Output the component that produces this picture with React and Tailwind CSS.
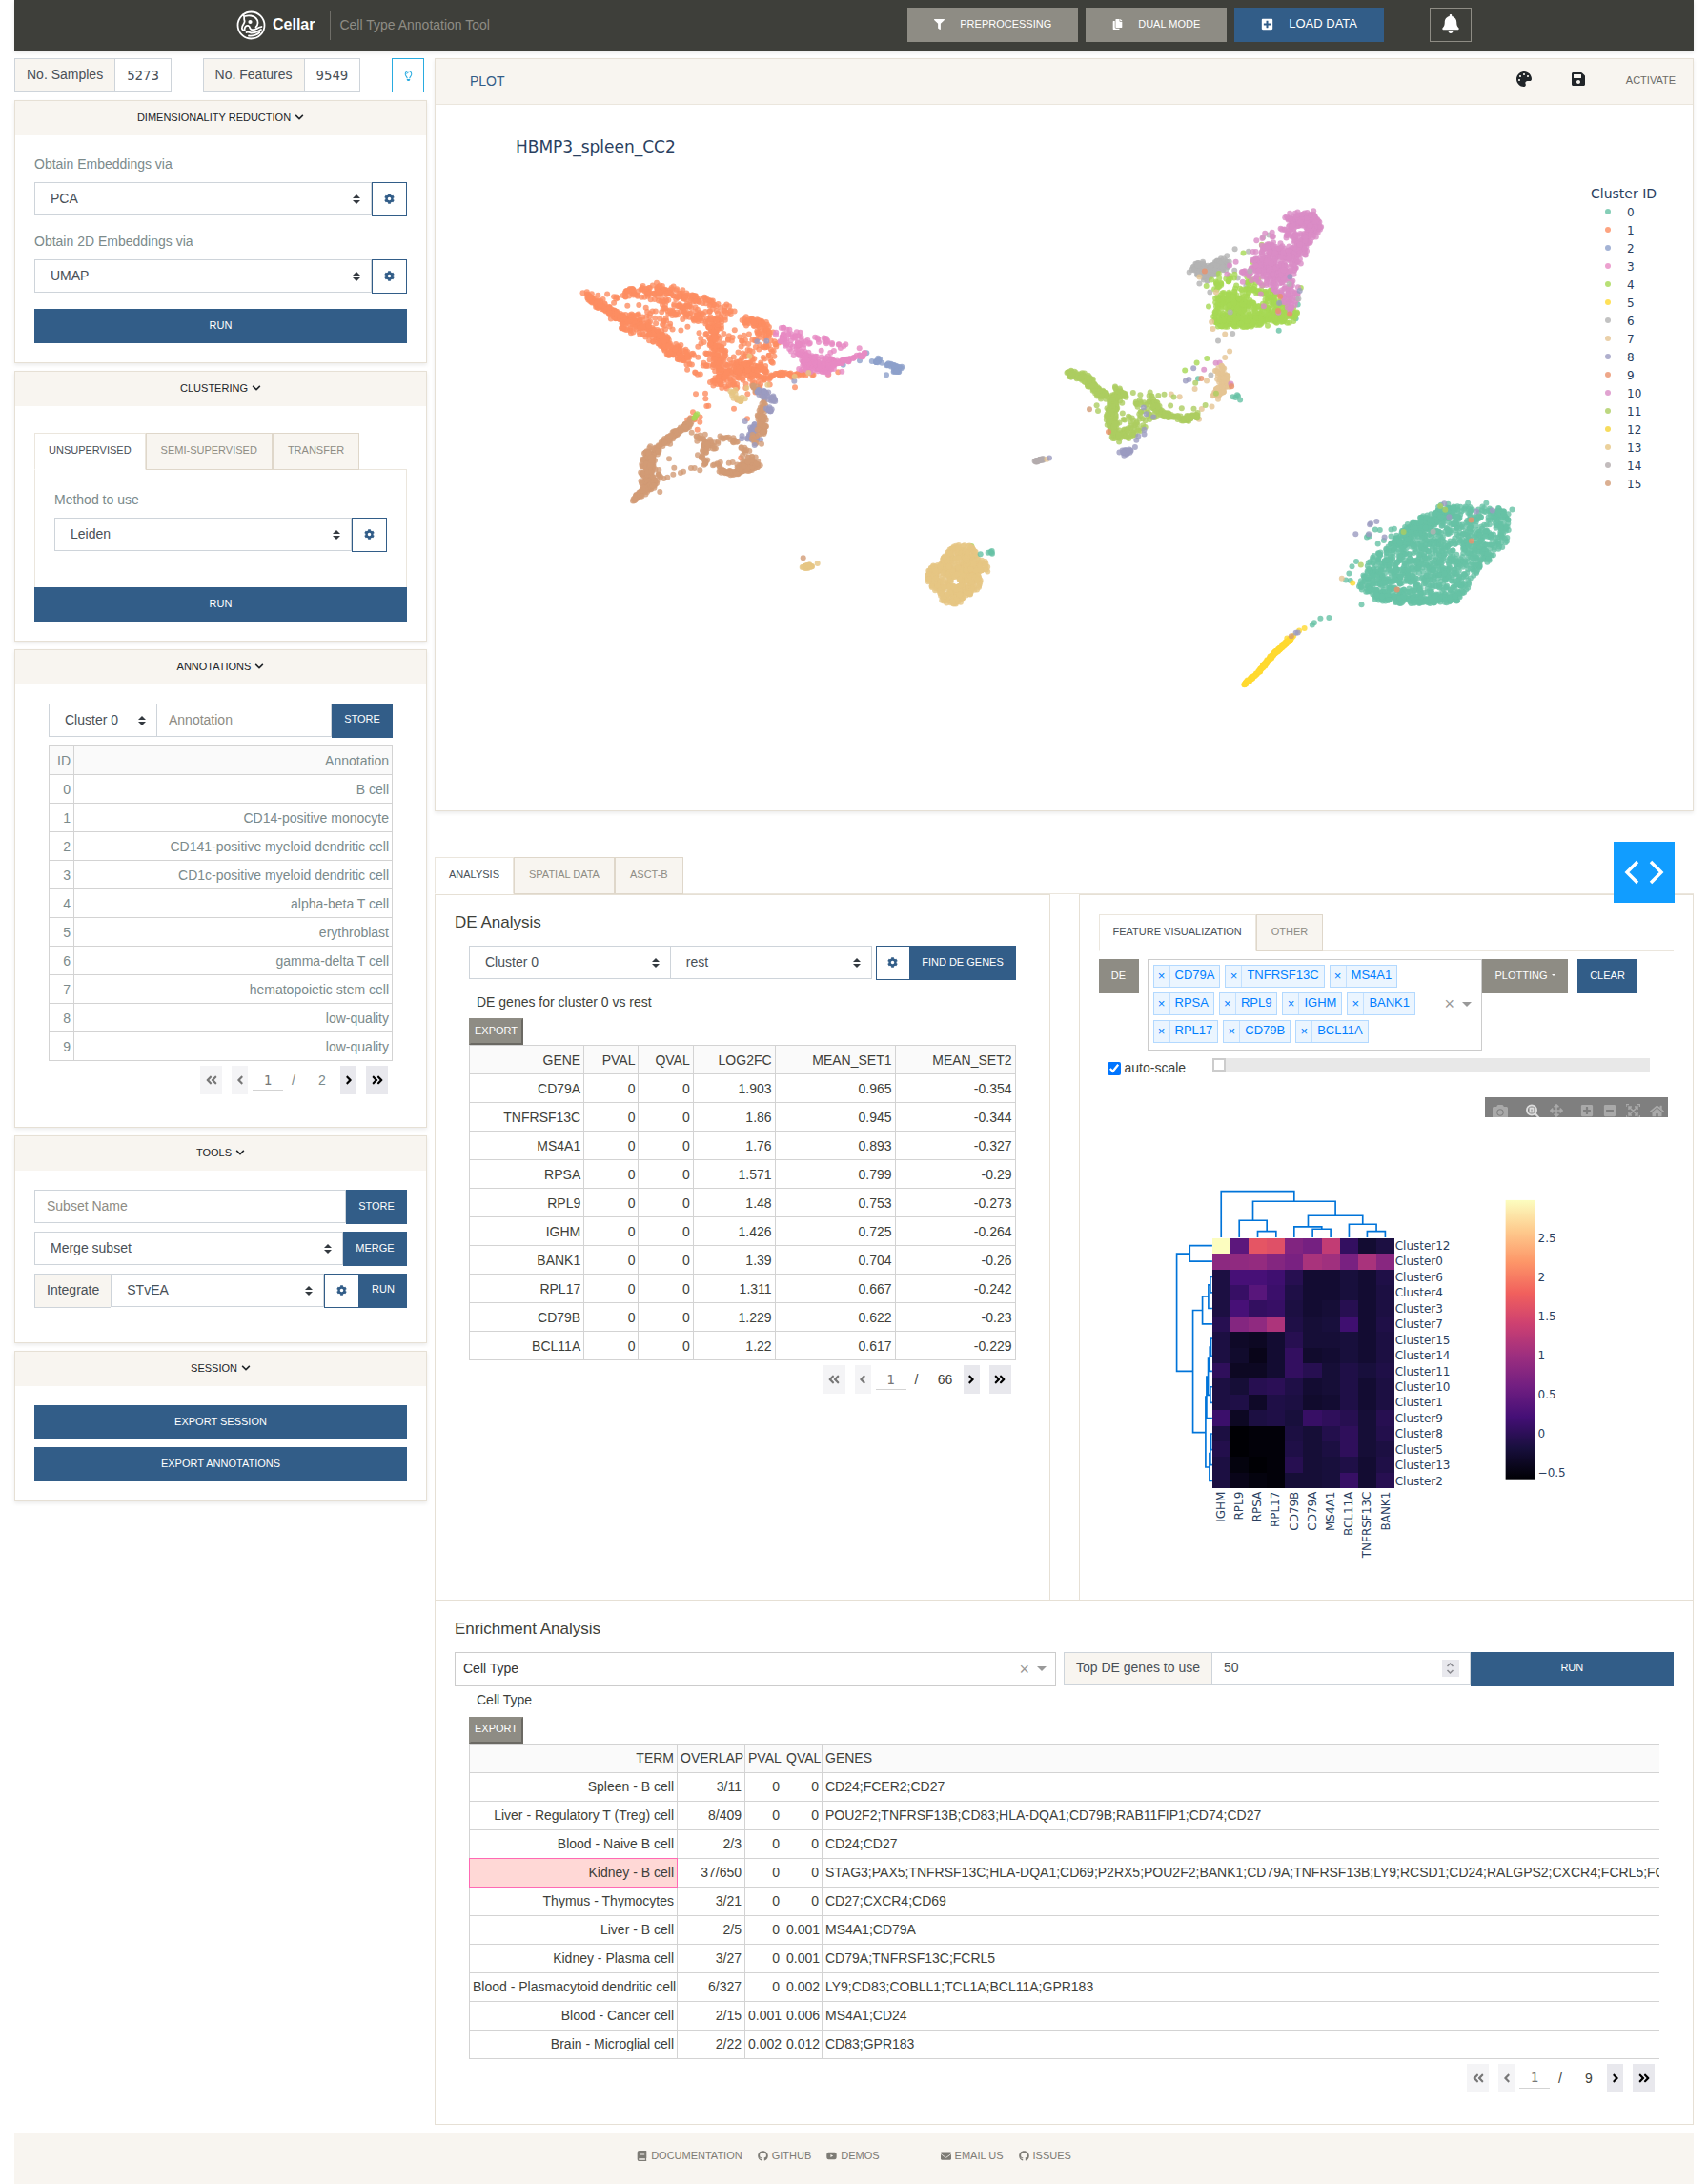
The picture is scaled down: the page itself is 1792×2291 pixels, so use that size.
import React from "react";
import {
  FaFilter, FaCopy, FaPlusSquare, FaBell, FaRegLightbulb, FaChevronDown, FaCog, FaPalette, FaSave,
  FaAngleDoubleLeft, FaAngleLeft, FaAngleRight, FaAngleDoubleRight, FaBook, FaGithub, FaYoutube,
  FaEnvelope, FaCamera, FaArrowsAlt, FaHome, FaMinusSquare,
} from "react-icons/fa";

const SORT = "pointer-events-none absolute right-3 top-1/2 -translate-y-1/2 text-[#343a40]";

function Select({ label, id, value, options = [], className = "" }) {
  return (
    <div className={"relative h-[35px] min-w-0 " + className}>
      <select
        id={id}
        aria-label={label}
        defaultValue={value}
        className="h-full w-full appearance-none border border-[#ced4da] bg-white pb-0.5 pl-4 pr-7 text-sm text-[#495057]"
      >
        {[value, ...options].map((o) => (
          <option key={o}>{o}</option>
        ))}
      </select>
      <svg className={SORT} width="8" height="10" viewBox="0 0 4 5" fill="currentColor" aria-hidden="true">
        <path d="M2 0L0 2h4zm0 5L0 3h4z" />
      </svg>
    </div>
  );
}

function Gear({ className = "w-[37px]" }) {
  return (
    <button aria-label="Settings" className={"flex h-9 shrink-0 items-center justify-center border border-[#325d88] bg-white pb-0.5 text-[#325d88] " + className}>
      <FaCog size={11} />
    </button>
  );
}

function Primary({ children, className = "" }) {
  return (
    <button className={"h-9 shrink-0 bg-[#325d88] pb-0.5 text-center text-[11px] text-white " + className}>{children}</button>
  );
}

function Card({ title, children, className = "" }) {
  return (
    <section className="border border-[#e6e0d5] bg-white shadow-[0_2px_4px_rgba(0,0,0,0.08)]">
      <button className="flex h-9 w-full items-center justify-center gap-1 bg-[#f8f5f0] pb-0.5 text-[11px] text-[#212529]">
        {title}
        <FaChevronDown size={10} />
      </button>
      <div className={"px-5 " + className}>{children}</div>
    </section>
  );
}

function Tabs({ items, className = "" }) {
  return (
    <div role="tablist" className={"flex border-b border-[#ebe6dd] " + className}>
      {items.map((t, i) => (
        <button
          key={t}
          role="tab"
          aria-selected={i === 0}
          className={
            i === 0
              ? "-mb-px h-[39px] border border-[#ebe6dd] border-b-white bg-white px-[14px] pb-0.5 text-[11px] text-[#495057]"
              : "-mb-px h-[39px] border border-[#dfd7ca] bg-[#f8f5f0] px-[15px] pb-0.5 text-[11px] text-[#8e8c84]"
          }
        >
          {t}
        </button>
      ))}
    </div>
  );
}

function Pager({ total, label }) {
  return (
    <div className="mr-[5px] mt-[5px] flex h-[30px] items-stretch justify-end text-sm">
      <button disabled aria-label="First page" className="flex w-[23px] items-center justify-center bg-[#f4f4f6] text-[#777]">
        <FaAngleDoubleLeft size={14} />
      </button>
      <button disabled aria-label="Previous page" className="ml-[10px] flex w-[17px] items-center justify-center bg-[#f4f4f6] text-[#777]">
        <FaAngleLeft size={14} />
      </button>
      <input
        aria-label={label}
        defaultValue="1"
        className="mb-1 ml-[5px] w-8 border-b border-[#d3d3d3] pt-1 text-center font-['DejaVu_Sans_Mono',monospace] text-sm text-[#777]"
      />
      <span className="w-[22px] self-center text-center">/</span>
      <span className="w-[38px] self-center text-center">{total}</span>
      <button aria-label="Next page" className="flex w-[17px] items-center justify-center bg-[#e8e8ed] text-black">
        <FaAngleRight size={14} />
      </button>
      <button aria-label="Last page" className="ml-[10px] flex w-[23px] items-center justify-center bg-[#e8e8ed] text-black">
        <FaAngleDoubleRight size={14} />
      </button>
    </div>
  );
}

const CELL = "h-[30px] border border-[#d3d3d3] px-[3px] text-right font-normal";
const CELL_ACTIVE = "h-[30px] border border-[#ff69b4] bg-[#ffd8d6] px-[3px] text-right font-normal";
const CELL_ABOVE_ACTIVE = "h-[30px] border border-[#d3d3d3] border-b-[#ff69b4] px-[3px] text-right font-normal";

function termCell(row) {
  if (row === 3) return CELL_ACTIVE;
  return row === 2 ? CELL_ABOVE_ACTIVE : CELL;
}

function Logo() {
  return (
    <svg width="31" height="31" viewBox="0 0 31 31" fill="none" stroke="white" strokeWidth="1.8" strokeLinecap="round" strokeLinejoin="round" aria-hidden="true">
      <circle cx="15.5" cy="15.5" r="14" />
      <path d="M7.500 5C9 7 7.500 8.500 8.500 10.500C9.500 13 6.500 14.500 6 17.500C5.500 20 7 21 8.500 20.500" />
      <path d="M9 6C13 4.500 18 5.500 20.500 8C23.500 11 23 15 20.500 17.500" />
      <path d="M8.500 20.500C8.500 17.500 10 15.500 12.500 16C14.500 16.500 13.500 18.500 15 19.500C17.500 21.500 20.500 19.500 22.500 18.500C24.500 17 25.500 17.500 26.500 17" />
      <path d="M10.500 23C12.500 21.500 13.500 23.500 15.500 23.500C19 23.500 22.500 22.500 26 20M13 26.500C17.500 27 21.500 25.500 24.500 23" />
      <circle cx="14.500" cy="12" r="1.200" fill="white" />
    </svg>
  );
}

/* ---------- UMAP scatter ---------- */

const C = {
  0: "#66c2a5", 1: "#fc8d62", 2: "#8da0cb", 3: "#e78ac3", 4: "#a6d854", 5: "#ffd92f", 6: "#b3b3b3",
  7: "#e5c494", 8: "#9b9bc0", 9: "#ea916b", 10: "#d98cc5", 11: "#adcd60", 12: "#f5d336", 13: "#e6c583",
  14: "#b3abad", 15: "#d29b75",
};

function rng(seed) {
  let s = seed;
  return () => {
    s = (s * 1664525 + 1013904223) % 4294967296;
    return s / 4294967296;
  };
}

function inside(poly, x, y) {
  let c = false;
  for (let i = 0, j = poly.length - 1; i < poly.length; j = i++) {
    const [xi, yi] = poly[i];
    const [xj, yj] = poly[j];
    if (yi > y !== yj > y && x < ((xj - xi) * (y - yi)) / (yj - yi) + xi) c = !c;
  }
  return c;
}

function buildPoints() {
  const r = rng(11);
  const out = [];
  let map = (x, y) => [x, y];
  const put = (c, x, y) => out.push([c, ...map(x, y)]);
  const blob = (c, poly, n, holes = [], keep = 0.06) => {
    const xs = poly.map((p) => p[0]);
    const ys = poly.map((p) => p[1]);
    const x0 = Math.min(...xs), x1 = Math.max(...xs), y0 = Math.min(...ys), y1 = Math.max(...ys);
    let k = 0;
    let guard = 0;
    while (k < n && guard++ < 60000) {
      const x = x0 + r() * (x1 - x0);
      const y = y0 + r() * (y1 - y0);
      if (!inside(poly, x, y)) continue;
      if (holes.some(([hx, hy, a, b]) => ((x - hx) / a) ** 2 + ((y - hy) / b) ** 2 < 1) && r() > keep) continue;
      put(c, x, y);
      k++;
    }
  };
  const trail = (c, pts, w, n) => {
    const seg = [];
    let len = 0;
    for (let i = 1; i < pts.length; i++) {
      const l = Math.hypot(pts[i][0] - pts[i - 1][0], pts[i][1] - pts[i - 1][1]);
      seg.push(l);
      len += l;
    }
    for (let k = 0; k < n; k++) {
      let t = r() * len;
      let i = 0;
      while (i < seg.length - 1 && t > seg[i]) t -= seg[i++];
      const f = t / seg[i];
      const j = () => (r() + r() - 1) * w;
      put(c, pts[i][0] + (pts[i + 1][0] - pts[i][0]) * f + j(), pts[i][1] + (pts[i + 1][1] - pts[i][1]) * f + j());
    }
  };
  const dots = (c, list) => list.forEach(([x, y]) => put(c, x, y));

  map = (x, y) => [590 + x / 3, 200 + y / 3];
  blob(1, [[75, 325], [105, 328], [150, 325], [200, 320], [285, 298], [325, 298], [390, 315], [455, 338], [525, 370], [545, 395], [560, 405], [600, 395], [655, 428], [685, 468], [672, 505], [668, 560], [665, 605], [610, 635], [530, 625], [480, 620], [425, 590], [395, 570], [370, 540], [320, 512], [250, 462], [195, 440], [150, 405], [110, 368]], 520,
    [[235, 362, 68, 24], [395, 450, 58, 44], [545, 428, 38, 32], [300, 375, 20, 25], [420, 530, 20, 40], [350, 400, 22, 16], [540, 500, 22, 22], [450, 590, 30, 14], [620, 540, 30, 12]]);
  trail(1, [[72, 324], [105, 350], [155, 385], [205, 410]], 14, 110);
  trail(1, [[200, 410], [290, 445], [330, 490], [405, 535]], 24, 140);
  trail(1, [[190, 322], [290, 305], [390, 330], [535, 380]], 18, 100);
  trail(1, [[310, 380], [400, 375], [440, 420]], 28, 45);
  trail(1, [[480, 400], [475, 490], [510, 580]], 26, 100);
  trail(1, [[500, 590], [560, 560], [640, 570]], 30, 100);
  trail(1, [[570, 405], [625, 420], [650, 460]], 18, 50);
  trail(1, [[665, 575], [730, 580], [785, 573]], 10, 35);
  trail(1, [[395, 722], [440, 712]], 10, 8);
  dots(1, [[420, 640], [450, 638], [451, 655], [460, 677], [454, 678], [540, 686], [582, 718], [411, 697], [433, 728], [425, 752], [732, 619], [868, 571], [583, 640], [625, 695], [562, 841], [205, 362], [241, 360], [263, 368], [550, 658], [838, 578]]);
  trail(2, [[980, 540], [995, 535]], 9, 14);
  trail(2, [[1020, 546], [1070, 560]], 7, 26);
  trail(2, [[1040, 570], [1056, 568]], 6, 10);
  dots(2, [[1006, 542], [1020, 580], [936, 535], [884, 548], [958, 511], [994, 527]]);
  blob(3, [[668, 450], [692, 425], [722, 437], [760, 450], [830, 464], [893, 485], [862, 520], [855, 545], [835, 578], [775, 578], [742, 562], [760, 530], [712, 525], [690, 480]], 130, [[812, 500, 40, 20], [722, 545, 25, 20]]);
  trail(3, [[765, 535], [825, 560], [850, 545]], 20, 80);
  trail(3, [[850, 545], [905, 533], [952, 512]], 8, 50);
  trail(3, [[735, 475], [745, 510], [780, 535]], 12, 36);
  dots(3, [[892, 484], [935, 496], [880, 569], [836, 578], [815, 503]]);
  trail(15, [[408, 722], [380, 748], [345, 770]], 11, 60);
  trail(15, [[345, 775], [300, 810], [275, 850]], 14, 80);
  trail(15, [[275, 830], [268, 890], [275, 935]], 26, 160);
  trail(15, [[290, 915], [250, 950], [222, 972]], 11, 80);
  trail(15, [[300, 890], [320, 905]], 20, 8);
  trail(15, [[430, 772], [455, 800], [480, 800]], 15, 34);
  trail(15, [[480, 790], [510, 772], [550, 790]], 13, 18);
  trail(15, [[450, 800], [448, 865], [500, 862]], 13, 26);
  trail(15, [[498, 882], [545, 890], [575, 870]], 8, 60);
  trail(15, [[560, 875], [612, 862]], 17, 80);
  trail(15, [[572, 812], [575, 850], [610, 850]], 18, 24);
  trail(15, [[600, 610], [640, 650], [622, 720]], 14, 32);
  trail(8, [[600, 625], [640, 640], [672, 660]], 13, 30);
  trail(8, [[648, 685], [655, 695]], 9, 10);
  trail(8, [[605, 735], [595, 775]], 14, 34);
  trail(8, [[565, 777], [625, 782]], 9, 16);
  trail(15, [[628, 705], [628, 765]], 15, 50);
  trail(15, [[600, 765], [606, 800]], 10, 9);
  dots(15, [[336, 844], [352, 872], [349, 893], [331, 902], [372, 888], [381, 884], [405, 873], [416, 873], [433, 880], [446, 863], [307, 948], [426, 832], [424, 788], [524, 857], [536, 855], [627, 797], [758, 1156], [277, 805], [407, 761]]);
  dots(8, [[613, 475], [643, 473], [730, 599], [575, 726], [605, 801]]);
  trail(13, [[532, 632], [550, 655], [580, 658]], 9, 16);
  dots(13, [[589, 521], [775, 573], [731, 585], [646, 611], [580, 620], [803, 1173], [545, 627]]);
  dots(4, [[417, 714], [420, 707], [415, 716], [424, 703], [1288, 1119]]);
  blob(13, [[1228, 1120], [1265, 1110], [1295, 1122], [1308, 1155], [1340, 1165], [1342, 1195], [1320, 1225], [1310, 1255], [1245, 1303], [1200, 1300], [1175, 1262], [1147, 1230], [1148, 1200], [1185, 1162]], 560, [[1322, 1205, 14, 9]]);
  trail(13, [[756, 1186], [784, 1182]], 8, 22);
  dots(0, [[1316, 1144], [1340, 1139], [1352, 1134], [1353, 1142], [1348, 1137], [1351, 1139]]);

  map = (x, y) => [1080 + x / 2.904, 200 + y / 2.904];
  blob(0, [[1035, 1120], [1085, 1090], [1130, 1030], [1200, 990], [1290, 962], [1340, 958], [1395, 960], [1465, 972], [1468, 1035], [1450, 1080], [1400, 1130], [1360, 1172], [1340, 1212], [1300, 1255], [1200, 1258], [1130, 1258], [1055, 1250], [1000, 1205], [1020, 1165]], 1250,
    [[1155, 1205, 22, 12], [1420, 1030, 14, 10], [1375, 1015, 9, 16], [1400, 1065, 12, 8]]);
  trail(0, [[1100, 1100], [1180, 1030], [1290, 970]], 30, 170);
  trail(0, [[1050, 1230], [1200, 1250], [1310, 1240]], 14, 110);
  dots(0, [[1032, 1050], [1028, 1056], [1036, 1053], [1062, 1076], [1080, 1066], [1054, 1032], [1068, 1034], [1102, 1032], [1112, 1030], [1102, 1053], [996, 1130], [983, 1145], [974, 1166], [964, 1186], [1012, 1261], [978, 1188], [913, 1301], [887, 1303], [868, 1316], [862, 1323], [1336, 952], [1392, 952], [1471, 971], [818, 347], [760, 426], [812, 390], [514, 573], [620, 628], [633, 622], [642, 637], [628, 630], [636, 626]]);
  dots(9, [[1346, 1003], [1347, 1067], [1120, 1215]]);
  dots(8, [[1264, 953], [1058, 1008], [1040, 1014], [1037, 1017], [994, 1046], [1034, 1046], [1082, 1056], [1362, 977], [1411, 974], [1279, 994]]);
  dots(6, [[1230, 1039]]);
  dots(11, [[1010, 1140], [1140, 1040], [1267, 972], [1252, 961]]);
  dots(7, [[952, 1181]]);
  trail(5, [[655, 1503], [690, 1475], [745, 1410], [800, 1362]], 4, 200);
  dots(5, [[785, 1363], [822, 1340], [838, 1333], [805, 1356], [985, 1195]]);
  dots(15, [[798, 1357]]);
  dots(8, [[812, 1347], [818, 1346]]);

  trail(6, [[505, 240], [545, 245], [595, 225]], 22, 190);
  trail(6, [[515, 220], [540, 262]], 18, 40);
  dots(6, [[487, 248], [602, 198], [592, 208], [626, 178], [668, 185], [625, 243], [550, 309], [518, 283], [542, 275], [635, 266], [575, 457], [619, 436], [712, 142], [730, 135], [553, 562], [660, 290], [572, 286]]);
  dots(9, [[534, 245], [524, 572]]);
  blob(4, [[560, 330], [600, 300], [690, 290], [760, 310], [808, 350], [808, 408], [760, 398], [650, 418], [560, 408]], 330, [[700, 330, 25, 14]]);
  trail(4, [[565, 395], [680, 400], [805, 375]], 22, 190);
  trail(4, [[580, 340], [660, 345]], 28, 70);
  trail(4, [[550, 292], [600, 265], [700, 280]], 22, 34);
  dots(4, [[546, 353], [652, 190], [680, 218], [827, 296], [541, 511], [510, 524], [474, 547], [663, 263], [708, 165]]);
  blob(10, [[770, 100], [800, 72], [865, 60], [888, 110], [850, 150], [848, 190], [825, 215], [800, 260], [822, 290], [820, 330], [800, 375], [770, 335], [740, 300], [685, 285], [645, 250], [690, 200], [700, 170], [715, 130], [755, 125]], 330, [[765, 162, 34, 20]]);
  trail(10, [[790, 95], [850, 80], [870, 115], [830, 160]], 26, 160);
  trail(10, [[825, 165], [790, 205], [720, 170]], 20, 100);
  trail(10, [[700, 210], [745, 250], [790, 250]], 34, 130);
  dots(10, [[692, 152], [718, 130], [866, 62], [889, 110], [629, 217], [610, 228], [602, 255], [647, 248], [650, 278], [827, 222], [714, 352], [759, 371], [705, 315], [568, 525], [580, 524], [532, 545], [797, 358], [794, 370]]);
  dots(6, [[792, 285], [672, 245], [612, 370], [820, 330]]);
  dots(8, [[761, 343], [794, 262], [824, 305]]);
  dots(9, [[764, 322], [758, 366], [793, 376]]);
  dots(7, [[518, 263], [569, 309], [555, 400], [559, 421], [596, 437], [610, 489], [596, 508], [540, 579], [504, 604], [556, 658], [525, 665], [517, 696], [432, 620], [458, 628], [575, 635]]);
  blob(7, [[562, 550], [588, 532], [618, 590], [598, 612], [572, 632], [556, 625], [578, 590]], 100);
  dots(10, [[614, 588]]);
  dots(9, [[616, 596]]);
  trail(11, [[122, 555], [170, 572], [205, 612], [235, 628]], 17, 150);
  blob(11, [[230, 635], [262, 600], [295, 615], [275, 680], [320, 645], [372, 615], [405, 670], [365, 718], [320, 748], [260, 762], [240, 705]], 120, [[300, 660, 22, 16], [275, 720, 14, 10]]);
  trail(11, [[258, 625], [248, 690], [262, 755]], 18, 130);
  trail(11, [[265, 745], [330, 738]], 14, 26);
  trail(11, [[375, 640], [400, 682], [480, 698], [520, 680]], 11, 100);
  trail(11, [[265, 605], [290, 625]], 14, 30);
  dots(11, [[316, 616], [338, 622], [368, 614], [393, 624], [411, 621], [430, 655], [464, 663], [501, 664], [536, 653], [440, 629], [205, 654], [209, 671], [506, 586], [569, 618]]);
  trail(8, [[284, 797], [306, 795]], 10, 24);
  dots(8, [[348, 661], [356, 680], [378, 690], [350, 742], [332, 748], [326, 760], [322, 781], [500, 541], [476, 579], [486, 575], [350, 728], [274, 797]]);
  dots(15, [[183, 666]]);
  dots(9, [[241, 735]]);
  trail(14, [[17, 825], [42, 818]], 3, 30);
  dots(7, [[53, 818]]);
  dots(8, [[61, 815]]);
  return out;
}

const POINTS = buildPoints();
const LEGEND = Array.from({ length: 16 }, (_, i) => i);

function Scatter() {
  return (
    <svg viewBox="457 110 1319 740" className="block h-auto w-full" fontFamily="'DejaVu Sans', Verdana, sans-serif" role="img" aria-label="UMAP scatter plot of HBMP3_spleen_CC2">
      <text x="541" y="160" fontSize="17" fill="#2a3f5f">HBMP3_spleen_CC2</text>
      {POINTS.map(([c, x, y], i) => (
        <circle key={i} cx={x.toFixed(1)} cy={y.toFixed(1)} r="3" fill={C[c]} fillOpacity="0.8" />
      ))}
      <text x="1669" y="208" fontSize="14" fill="#2a3f5f">Cluster ID</text>
      {LEGEND.map((i) => (
        <g key={i}>
          <circle cx="1687" cy={222 + i * 19} r="3" fill={C[i]} fillOpacity="0.8" />
          <text x="1707" y={227 + i * 19} fontSize="12" fill="#2a3f5f">{i}</text>
        </g>
      ))}
    </svg>
  );
}

/* ---------- Clustered heatmap ---------- */

const MAGMA = ["#000004", "#180f3d", "#440f76", "#721f81", "#9e2f7f", "#cd4071", "#f1605d", "#fd9668", "#feca8d", "#fcfdbf"];

function magma(v) {
  const p = (v / 100) * (MAGMA.length - 1);
  const i = Math.min(Math.floor(p), MAGMA.length - 2);
  const f = p - i;
  const ch = (h, k) => parseInt(h.slice(1 + k * 2, 3 + k * 2), 16);
  return "rgb(" + [0, 1, 2].map((k) => Math.round(ch(MAGMA[i], k) * (1 - f) + ch(MAGMA[i + 1], k) * f)).join(",") + ")";
}

const GENES = ["IGHM", "RPL9", "RPSA", "RPL17", "CD79B", "CD79A", "MS4A1", "BCL11A", "TNFRSF13C", "BANK1"];
const HEAT = [
  ["Cluster12", 100, 28, 63, 61, 37, 34, 53, 18, 9, 12],
  ["Cluster0", 40, 41, 42, 38, 35, 47, 45, 35, 47, 39],
  ["Cluster6", 12, 23, 23, 21, 15, 9, 9, 11, 9, 13],
  ["Cluster4", 12, 19, 27, 20, 13, 9, 9, 11, 9, 12],
  ["Cluster3", 12, 23, 18, 19, 12, 9, 10, 15, 9, 12],
  ["Cluster7", 15, 38, 41, 48, 13, 10, 11, 21, 9, 13],
  ["Cluster15", 12, 7, 6, 9, 15, 10, 10, 11, 9, 12],
  ["Cluster14", 12, 8, 4, 9, 18, 8, 9, 11, 9, 12],
  ["Cluster11", 17, 6, 6, 9, 18, 15, 10, 13, 11, 13],
  ["Cluster10", 12, 10, 15, 16, 13, 9, 10, 13, 9, 12],
  ["Cluster1", 12, 13, 7, 13, 12, 8, 9, 13, 9, 12],
  ["Cluster9", 20, 6, 12, 13, 11, 19, 17, 15, 10, 15],
  ["Cluster8", 12, 0, 1, 1, 12, 10, 14, 17, 10, 14],
  ["Cluster5", 14, 0, 1, 1, 13, 10, 12, 17, 10, 12],
  ["Cluster13", 12, 2, 0, 1, 15, 10, 11, 13, 9, 13],
  ["Cluster2", 12, 4, 2, 1, 10, 10, 11, 19, 9, 15],
];

const DENDRO =
  "M241 231V86H471V118M341 178V118H601V163M298 231V178H385V212M356 231V212H414V231" +
  "M515 198V163H687V190M471 231V198H558V205M529 231V205H586V231M644 231V190H730V212M701 231V212H758V231" +
  "M142 283H101V653H152M213 257H142V307H213M182 461H152V846H192M201 417H182V504H213" +
  "M207 381H201V455H213M213 356H207V405H213M195 733H192V955H204M207 912H204V998H213" +
  "M209 873H207V948H213M213 850H209V900H213M200 670H195V801H213M205 613H200V728H207M209 577H205V653H213" +
  "M213 550H209V605H213M213 702H207V752H213";

function Heatmap() {
  return (
    <svg viewBox="1152 1171 604 480" className="block h-auto w-full" fontFamily="'DejaVu Sans', Verdana, sans-serif" fontSize="12" fill="#2a3f5f" role="img" aria-label="Clustered heatmap of gene expression">
      <defs>
        <linearGradient id="magma" x1="0" y1="1" x2="0" y2="0">
          {MAGMA.map((c, i) => (
            <stop key={c} offset={i / (MAGMA.length - 1)} stopColor={c} />
          ))}
        </linearGradient>
      </defs>
      <path transform="translate(1200 1220) scale(0.3333)" d={DENDRO} fill="none" stroke="#0074d9" strokeWidth="5" />
      <g shapeRendering="crispEdges">
        {HEAT.map((row, j) =>
          row.slice(1).map((v, i) => (
            <rect key={i + "-" + j} x={1271 + i * 19.12} y={1298 + j * 16.4} width="19.5" height="16.7" fill={magma(v)} />
          ))
        )}
      </g>
      {HEAT.map((row, j) => (
        <text key={row[0]} x="1463" y={1310 + j * 16.47}>{row[0]}</text>
      ))}
      {GENES.map((g, i) => (
        <text key={g} textAnchor="end" transform={`translate(${1284 + i * 19.2} 1564) rotate(-90)`}>{g}</text>
      ))}
      <rect x="1579" y="1258" width="31" height="293" fill="url(#magma)" />
      {["2.5", "2", "1.5", "1", "0.5", "0", "−0.5"].map((t, i) => (
        <text key={t} x="1613" y={1302 + i * 41}>{t}</text>
      ))}
    </svg>
  );
}

/* ---------- Data ---------- */

const ANNOTATIONS = [
  "B cell", "CD14-positive monocyte", "CD141-positive myeloid dendritic cell", "CD1c-positive myeloid dendritic cell",
  "alpha-beta T cell", "erythroblast", "gamma-delta T cell", "hematopoietic stem cell", "low-quality", "low-quality",
];

const DE = [
  ["CD79A", 0, 0, "1.903", "0.965", "-0.354"],
  ["TNFRSF13C", 0, 0, "1.86", "0.945", "-0.344"],
  ["MS4A1", 0, 0, "1.76", "0.893", "-0.327"],
  ["RPSA", 0, 0, "1.571", "0.799", "-0.29"],
  ["RPL9", 0, 0, "1.48", "0.753", "-0.273"],
  ["IGHM", 0, 0, "1.426", "0.725", "-0.264"],
  ["BANK1", 0, 0, "1.39", "0.704", "-0.26"],
  ["RPL17", 0, 0, "1.311", "0.667", "-0.242"],
  ["CD79B", 0, 0, "1.229", "0.622", "-0.23"],
  ["BCL11A", 0, 0, "1.22", "0.617", "-0.229"],
];

const ENRICH = [
  ["Spleen - B cell", "3/11", "0", "0", "CD24;FCER2;CD27"],
  ["Liver - Regulatory T (Treg) cell", "8/409", "0", "0", "POU2F2;TNFRSF13B;CD83;HLA-DQA1;CD79B;RAB11FIP1;CD74;CD27"],
  ["Blood - Naive B cell", "2/3", "0", "0", "CD24;CD27"],
  ["Kidney - B cell", "37/650", "0", "0", "STAG3;PAX5;TNFRSF13C;HLA-DQA1;CD69;P2RX5;POU2F2;BANK1;CD79A;TNFRSF13B;LY9;RCSD1;CD24;RALGPS2;CXCR4;FCRL5;FC"],
  ["Thymus - Thymocytes", "3/21", "0", "0", "CD27;CXCR4;CD69"],
  ["Liver - B cell", "2/5", "0", "0.001", "MS4A1;CD79A"],
  ["Kidney - Plasma cell", "3/27", "0", "0.001", "CD79A;TNFRSF13C;FCRL5"],
  ["Blood - Plasmacytoid dendritic cell", "6/327", "0", "0.002", "LY9;CD83;COBLL1;TCL1A;BCL11A;GPR183"],
  ["Blood - Cancer cell", "2/15", "0.001", "0.006", "MS4A1;CD24"],
  ["Brain - Microglial cell", "2/22", "0.002", "0.012", "CD83;GPR183"],
];

const TAG_ROWS = [
  ["CD79A", "TNFRSF13C", "MS4A1"],
  ["RPSA", "RPL9", "IGHM", "BANK1"],
  ["RPL17", "CD79B", "BCL11A"],
];

function Export() {
  return (
    <button className="block h-7 border-2 border-b-[#6b6963] border-l-[#8e8c84] border-r-[#6b6963] border-t-[#8e8c84] bg-[#8e8c84] px-1 pb-0.5 text-[11px] text-white">
      EXPORT
    </button>
  );
}

function Stat({ label, value }) {
  return (
    <div className="flex h-[35px] items-stretch border border-[#ced4da] text-sm text-[#495057]">
      <span className="flex items-center border-r border-[#ced4da] bg-[#f8f5f0] px-3 pb-0.5">{label}</span>
      <span className="flex items-center px-3 font-['DejaVu_Sans_Mono',monospace]">{value}</span>
    </div>
  );
}

function Navbar() {
  return (
    <header className="bg-[#3e3f3a] shadow-[0_2px_4px_rgba(0,0,0,0.1)]">
      <div className="mx-auto flex h-[53px] max-w-[1296px] items-center justify-between">
        <div className="flex items-center">
          <Logo />
          <span className="ml-[7px] pb-0.5 text-base font-bold text-white">Cellar</span>
          <span className="ml-4 border-l border-[#6f6e68] pb-0.5 pl-[9px] text-sm leading-[28px] text-[#8e8c84]">Cell Type Annotation Tool</span>
        </div>
        <div className="flex items-center gap-2 pb-px text-white">
          <button className="flex h-9 items-center gap-4 bg-[#8e8c84] px-7 pb-0.5 text-[11px]">
            <FaFilter size={11} />
            PREPROCESSING
          </button>
          <button className="flex h-9 items-center gap-4 bg-[#8e8c84] px-7 pb-0.5 text-[11px]">
            <FaCopy size={11} />
            DUAL MODE
          </button>
          <button className="flex h-9 items-center gap-4 bg-[#325d88] px-7 pb-0.5 text-[13px]">
            <FaPlusSquare size={13} />
            LOAD DATA
          </button>
          <button aria-label="Notifications" className="ml-10 flex h-9 w-11 items-center justify-center border border-[#8e8c84] pb-0.5">
            <FaBell size={20} />
          </button>
        </div>
      </div>
    </header>
  );
}

function Sidebar() {
  return (
    <aside className="flex min-w-0 flex-col gap-2">
      <div className="mr-[3px] flex h-9 items-start justify-between">
        <Stat label="No. Samples" value="5273" />
        <Stat label="No. Features" value="9549" />
        <button aria-label="Hints" className="flex h-9 w-[34px] items-center justify-center border border-[#29abe0] text-[#29abe0]">
          <FaRegLightbulb size={11} />
        </button>
      </div>

      <Card title="DIMENSIONALITY REDUCTION" className="py-5">
        <p className="mb-2 text-sm leading-[21px] text-[#7b8a8b]">Obtain Embeddings via</p>
        <div className="mb-4 flex">
          <Select label="Obtain Embeddings via" value="PCA" className="flex-1" />
          <Gear />
        </div>
        <p className="mb-2 text-sm leading-[21px] text-[#7b8a8b]">Obtain 2D Embeddings via</p>
        <div className="mb-4 flex">
          <Select label="Obtain 2D Embeddings via" value="UMAP" className="flex-1" />
          <Gear />
        </div>
        <Primary className="block w-full">RUN</Primary>
      </Card>

      <Card title="CLUSTERING" className="pb-5 pt-7">
        <Tabs items={["UNSUPERVISED", "SEMI-SUPERVISED", "TRANSFER"]} />
        <div className="border-x border-[#ebe6dd] px-5 pb-[37px] pt-[21px]">
          <p className="mb-2 text-sm leading-[21px] text-[#7b8a8b]">Method to use</p>
          <div className="flex">
            <Select label="Method to use" value="Leiden" className="flex-1" />
            <Gear />
          </div>
        </div>
        <Primary className="block w-full">RUN</Primary>
      </Card>

      <Card title="ANNOTATIONS" className="pb-[34px] pt-5">
        <div className="px-[15px] text-sm text-[#7b8a8b]">
          <div className="mb-2 flex">
            <Select label="Cluster to annotate" value="Cluster 0" className="w-[114px]" />
            <input aria-label="Annotation" placeholder="Annotation" className="h-[35px] min-w-0 flex-1 border border-l-0 border-[#ced4da] px-3 pb-0.5 text-sm placeholder:text-[#8e8c84]" />
            <Primary className="w-16">STORE</Primary>
          </div>
          <table className="w-full table-fixed border-collapse">
            <colgroup>
              <col className="w-[26px]" />
              <col />
            </colgroup>
            <thead className="bg-[#fafafa]">
              <tr>
                <th className={CELL}>ID</th>
                <th className={CELL}>Annotation</th>
              </tr>
            </thead>
            <tbody>
              {ANNOTATIONS.map((a, i) => (
                <tr key={i}>
                  <td className={CELL}>{i}</td>
                  <td className={CELL}>{a}</td>
                </tr>
              ))}
            </tbody>
          </table>
          <Pager total="2" label="Annotations page" />
        </div>
      </Card>

      <Card title="TOOLS" className="flex flex-col gap-2 pb-9 pt-5">
        <div className="flex">
          <input aria-label="Subset name" placeholder="Subset Name" className="h-[35px] min-w-0 flex-1 border border-[#ced4da] px-3 pb-0.5 text-sm placeholder:text-[#8e8c84]" />
          <Primary className="w-16">STORE</Primary>
        </div>
        <div className="flex">
          <Select label="Merge subset" value="Merge subset" className="flex-1" />
          <Primary className="w-[67px]">MERGE</Primary>
        </div>
        <div className="flex text-sm text-[#495057]">
          <label htmlFor="integrate" className="flex h-9 items-center border border-r-0 border-[#ced4da] bg-[#f8f5f0] px-3 pb-0.5">Integrate</label>
          <Select id="integrate" value="STvEA" className="flex-1" />
          <Gear />
          <Primary className="w-[50px]">RUN</Primary>
        </div>
      </Card>

      <Card title="SESSION" className="flex flex-col gap-2 py-5">
        <Primary>EXPORT SESSION</Primary>
        <Primary>EXPORT ANNOTATIONS</Primary>
      </Card>
    </aside>
  );
}

function PlotCard() {
  return (
    <section className="border border-[#e6e0d5] bg-white shadow-[0_2px_4px_rgba(0,0,0,0.08)]">
      <div className="flex h-12 items-center justify-between border-b border-[#ebe6dd] bg-[#f8f5f0] pb-0.5 pl-9 pr-[18px]">
        <h2 className="text-sm text-[#325d88]">PLOT</h2>
        <div className="flex items-center text-[#212529]">
          <button aria-label="Colors" className="mb-1"><FaPalette size={16} /></button>
          <button aria-label="Save plot" className="mb-1 ml-[41px]"><FaSave size={16} /></button>
          <button className="ml-[42px] text-[11px] text-[#6c6b66]">ACTIVATE</button>
        </div>
      </div>
      <Scatter />
    </section>
  );
}

function DePanel() {
  return (
    <section className="border border-[#e6e0d5] bg-white px-[35px] pt-[17px]">
      <h2 className="-ml-[15px] mb-3 text-[17px] leading-6">DE Analysis</h2>
      <div className="flex">
        <div className="mr-1 flex min-w-0 flex-1">
          <Select label="Cluster" value="Cluster 0" className="flex-1" />
          <Select label="Compared with" value="rest" className="-ml-px flex-1" />
        </div>
        <Gear className="w-9" />
        <Primary className="w-[111px]">FIND DE GENES</Primary>
      </div>
      <p className="mb-[6px] ml-2 mt-[13px] text-sm leading-[21px]">DE genes for cluster 0 vs rest</p>
      <Export />
      <table className="w-full table-fixed border-collapse text-sm">
        <colgroup>
          <col className="w-[21%]" />
          <col className="w-[10%]" />
          <col className="w-[10%]" />
          <col className="w-[15%]" />
          <col className="w-[22%]" />
          <col className="w-[22%]" />
        </colgroup>
        <thead className="bg-[#fafafa]">
          <tr>
            {["GENE", "PVAL", "QVAL", "LOG2FC", "MEAN_SET1", "MEAN_SET2"].map((h) => (
              <th key={h} className={CELL}>{h}</th>
            ))}
          </tr>
        </thead>
        <tbody>
          {DE.map((row) => (
            <tr key={row[0]}>
              {row.map((v, i) => (
                <td key={i} className={CELL}>{v}</td>
              ))}
            </tr>
          ))}
        </tbody>
      </table>
      <Pager total="66" label="DE genes page" />
    </section>
  );
}

function ModeBar() {
  return (
    <div className="mr-[6px] mt-5 flex h-[21px] w-48 items-start justify-end gap-[10px] self-end overflow-hidden bg-[#7f7f7f] pr-1 pt-[7px] text-[#a9a9a9]">
      <button aria-label="Download plot" className="mr-2"><FaCamera size={16} /></button>
      <button aria-label="Zoom" className="text-[#dcdcdc]">
        <svg width="16" height="16" viewBox="0 0 16 16" fill="none" stroke="currentColor" strokeWidth="2"><circle cx="7" cy="6.500" r="5" /><path d="M10.500 10L15 15M5.500 4.500h3v4h-3z" /></svg>
      </button>
      <button aria-label="Pan" className="mr-2"><FaArrowsAlt size={14} /></button>
      <button aria-label="Zoom in"><FaPlusSquare size={14} /></button>
      <button aria-label="Zoom out"><FaMinusSquare size={14} /></button>
      <button aria-label="Autoscale">
        <svg width="15" height="15" viewBox="0 0 15 15" fill="none" stroke="currentColor" strokeWidth="1.500"><path d="M3 3l9 9M12 3l-9 9M3 6V3h3M9 3h3v3M12 9v3H9M6 12H3V9M0 3V.500h3M12 .500h2.500V3M0 12v2.500h3M12 14.500h2.500V12" /></svg>
      </button>
      <button aria-label="Reset axes"><FaHome size={15} /></button>
    </div>
  );
}

function FeaturePanel() {
  return (
    <section className="flex min-w-0 flex-col border border-[#e6e0d5] bg-white px-5 pb-[26px] pt-5">
      <Tabs items={["FEATURE VISUALIZATION", "OTHER"]} />
      <div className="mr-[38px] mt-2 flex items-start">
        <button className="h-9 w-[42px] shrink-0 bg-[#8e8c84] pb-0.5 text-[11px] text-white">DE</button>
        <div className="ml-[9px] flex min-w-0 flex-1 items-center border border-[#ccc] bg-white pb-[7px] pl-[5px] pr-[10px] pt-[5px]">
          <div className="flex flex-1 flex-col gap-[5px]">
            {TAG_ROWS.map((row) => (
              <div key={row[0]} className="flex gap-[5px]">
                {row.map((t) => (
                  <span key={t} className="flex h-6 items-stretch border border-[#b3d9ff] bg-[#ebf5ff] text-[13px] text-[#007eff]">
                    <button aria-label={"Remove " + t} className="w-[17px] border-r border-[#c2e0ff] pb-0.5 leading-none">×</button>
                    <span className="flex items-center px-[5px] pb-0.5">{t}</span>
                  </span>
                ))}
              </div>
            ))}
          </div>
          <button aria-label="Clear all" className="text-[18px] leading-none text-[#999]">×</button>
          <span className="ml-2 border-x-[5px] border-t-[5px] border-x-transparent border-t-[#999]" />
        </div>
        <button className="flex h-9 w-[90px] shrink-0 items-center justify-center gap-1 bg-[#8e8c84] pb-0.5 text-[11px] text-white">
          PLOTTING
          <span className="border-x-2 border-t-2 border-x-transparent border-t-white" />
        </button>
        <Primary className="ml-[10px] w-[63px]">CLEAR</Primary>
      </div>
      <div className="ml-[9px] mr-[25px] mt-2 flex items-start">
        <label className="flex w-[110px] items-center gap-1 text-sm leading-[21px]">
          <input type="checkbox" defaultChecked className="h-[14px] w-[14px] accent-[#0075ff]" />
          auto-scale
        </label>
        <input
          type="range"
          aria-label="Expression threshold"
          defaultValue="0"
          className="h-[14px] min-w-0 flex-1 appearance-none bg-[#e8e8e8] [&::-webkit-slider-thumb]:h-[14px] [&::-webkit-slider-thumb]:w-[14px] [&::-webkit-slider-thumb]:appearance-none [&::-webkit-slider-thumb]:border-2 [&::-webkit-slider-thumb]:border-solid [&::-webkit-slider-thumb]:border-[#ccc] [&::-webkit-slider-thumb]:bg-white"
        />
      </div>
      <ModeBar />
      <Heatmap />
    </section>
  );
}

function EnrichPanel() {
  return (
    <section className="-mt-px border border-[#e6e0d5] bg-white px-5 pb-[33px] pt-[18px]">
      <h2 className="mb-3 text-[17px] leading-6">Enrichment Analysis</h2>
      <div className="grid grid-cols-[minmax(0,631fr)_minmax(0,640fr)] gap-2">
        <div className="relative h-9">
          <select aria-label="Gene set" defaultValue="Cell Type" className="h-full w-full appearance-none border border-[#ccc] bg-white pb-0.5 pl-2 text-sm text-[#333]">
            <option>Cell Type</option>
          </select>
          <div className="absolute inset-y-0 right-[10px] flex items-center">
            <button aria-label="Clear gene set" className="text-[18px] leading-none text-[#999]">×</button>
            <span className="pointer-events-none ml-2 border-x-[5px] border-t-[5px] border-x-transparent border-t-[#999]" />
          </div>
        </div>
        <div className="flex text-sm text-[#495057]">
          <label htmlFor="top-genes" className="flex h-[35px] items-center border border-[#ced4da] bg-[#f8f5f0] px-3 pb-0.5">Top DE genes to use</label>
          <div className="relative min-w-0 flex-1">
            <input id="top-genes" type="text" inputMode="numeric" defaultValue="50" className="h-[35px] w-full border border-l-0 border-[#ced4da] px-3 pb-0.5" />
            <span className="absolute right-3 top-2 flex h-[18px] w-[18px] items-center justify-center bg-[#e8e8ed] text-[#8a8a90]">
              <svg width="9" height="14" viewBox="0 0 9 14" fill="none" stroke="currentColor" strokeWidth="1.500" aria-hidden="true"><path d="M1.500 5l3-3 3 3M1.500 9l3 3 3-3" /></svg>
            </span>
          </div>
          <Primary className="w-1/3">RUN</Primary>
        </div>
      </div>
      <div className="mx-[15px] mt-1">
        <p className="mb-[7px] ml-2 text-sm leading-[21px]">Cell Type</p>
        <Export />
        <div className="overflow-hidden">
          <table className="w-[1400px] table-fixed border-collapse whitespace-nowrap text-sm">
            <colgroup>
              <col className="w-[218px]" />
              <col className="w-[71px]" />
              <col className="w-[40px]" />
              <col className="w-[41px]" />
              <col />
            </colgroup>
            <thead className="bg-[#fafafa]">
              <tr>
                {["TERM", "OVERLAP", "PVAL", "QVAL"].map((h) => (
                  <th key={h} className={CELL}>{h}</th>
                ))}
                <th className="h-[30px] border border-[#d3d3d3] px-[3px] text-left font-normal">GENES</th>
              </tr>
            </thead>
            <tbody>
              {ENRICH.map((row, j) => (
                <tr key={row[0]}>
                  <td className={termCell(j)}>{row[0]}</td>
                  <td className={CELL}>{row[1]}</td>
                  <td className={CELL}>{row[2]}</td>
                  <td className={CELL}>{row[3]}</td>
                  <td className="h-[30px] border border-[#d3d3d3] px-[3px] text-left">{row[4]}</td>
                </tr>
              ))}
            </tbody>
          </table>
        </div>
        <Pager total="9" label="Enrichment page" />
      </div>
    </section>
  );
}

function FooterLink({ icon: Icon, children }) {
  return (
    <a href="#" className="flex items-center gap-1">
      <Icon size={11} />
      {children}
    </a>
  );
}

export default function App() {
  return (
    <div className="bg-white px-[15px] font-['Liberation_Sans',Arial,sans-serif] text-[#3e3f3a]">
      <Navbar />
      <main className="mt-2 grid grid-cols-[minmax(0,433fr)_minmax(0,1321fr)] gap-2">
        <Sidebar />
        <div className="min-w-0">
          <PlotCard />
          <div className="relative mt-12">
            <Tabs items={["ANALYSIS", "SPATIAL DATA", "ASCT-B"]} />
            <button aria-label="Toggle code panel" className="absolute -top-4 right-5 flex h-16 w-16 items-center justify-center bg-[#119dff] text-white">
              <svg width="44" height="28" viewBox="0 0 44 28" fill="none" stroke="currentColor" strokeWidth="3.500"><path d="M15 3L4 14l11 11M29 3l11 11-11 11" /></svg>
            </button>
          </div>
          <div className="grid grid-cols-2 gap-[30px]">
            <DePanel />
            <FeaturePanel />
          </div>
          <EnrichPanel />
        </div>
      </main>
      <footer className="mt-2 flex h-[54px] items-center justify-center gap-4 bg-[#f8f5f0] pb-1 text-[11px] text-[#7d7b75]">
        <FooterLink icon={FaBook}>DOCUMENTATION</FooterLink>
        <FooterLink icon={FaGithub}>GITHUB</FooterLink>
        <FooterLink icon={FaYoutube}>DEMOS</FooterLink>
        <span className="w-8" />
        <FooterLink icon={FaEnvelope}>EMAIL US</FooterLink>
        <FooterLink icon={FaGithub}>ISSUES</FooterLink>
      </footer>
    </div>
  );
}
